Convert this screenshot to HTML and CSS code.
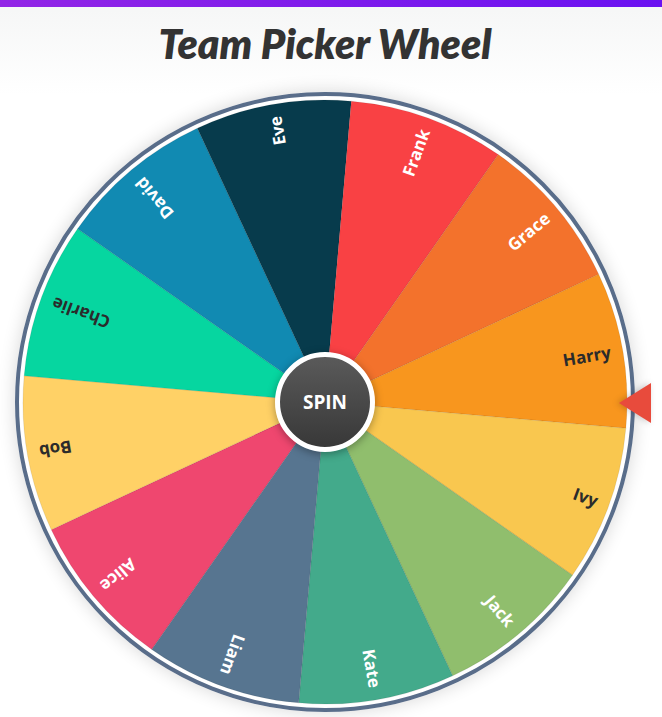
FILE: index.html
```html
<!DOCTYPE html>
<html lang="en">
<head>
<meta charset="utf-8">
<title>Team Picker Wheel</title>
<link rel="stylesheet" href="styles.css">
</head>
<body>
<div class="topbar"></div>
<main class="page">
  <h1 class="title">Team Picker Wheel</h1>
  <div class="wheel-wrap">
    <svg class="wheel" viewBox="0 0 620 620" width="620" height="620">
      <circle cx="310" cy="310" r="308" fill="#ffffff" stroke="#596d8a" stroke-width="4"/>
      <g transform="translate(310 310)" class="slices">
        <path transform="rotate(140)" fill="#ef476f" d="M0 0 L291.71 -78.16 A302 302 0 0 1 291.71 78.16 Z"/>
        <path transform="rotate(170)" fill="#ffd166" d="M0 0 L291.71 -78.16 A302 302 0 0 1 291.71 78.16 Z"/>
        <path transform="rotate(200)" fill="#06d6a0" d="M0 0 L291.71 -78.16 A302 302 0 0 1 291.71 78.16 Z"/>
        <path transform="rotate(230)" fill="#118ab2" d="M0 0 L291.71 -78.16 A302 302 0 0 1 291.71 78.16 Z"/>
        <path transform="rotate(260)" fill="#073b4c" d="M0 0 L291.71 -78.16 A302 302 0 0 1 291.71 78.16 Z"/>
        <path transform="rotate(290)" fill="#f94144" d="M0 0 L291.71 -78.16 A302 302 0 0 1 291.71 78.16 Z"/>
        <path transform="rotate(320)" fill="#f3722c" d="M0 0 L291.71 -78.16 A302 302 0 0 1 291.71 78.16 Z"/>
        <path transform="rotate(-10)" fill="#f8961e" d="M0 0 L291.71 -78.16 A302 302 0 0 1 291.71 78.16 Z"/>
        <path transform="rotate(20)" fill="#f9c74f" d="M0 0 L291.71 -78.16 A302 302 0 0 1 291.71 78.16 Z"/>
        <path transform="rotate(50)" fill="#90be6d" d="M0 0 L291.71 -78.16 A302 302 0 0 1 291.71 78.16 Z"/>
        <path transform="rotate(80)" fill="#43aa8b" d="M0 0 L291.71 -78.16 A302 302 0 0 1 291.71 78.16 Z"/>
        <path transform="rotate(110)" fill="#577590" d="M0 0 L291.71 -78.16 A302 302 0 0 1 291.71 78.16 Z"/>
      </g>
      <g transform="translate(310 310)" class="labels">
        <text transform="rotate(140)" x="290" y="0" class="light">Alice</text>
        <text transform="rotate(170)" x="290" y="0" class="dark">Bob</text>
        <text transform="rotate(200)" x="290" y="0" class="dark">Charlie</text>
        <text transform="rotate(230)" x="290" y="0" class="light">David</text>
        <text transform="rotate(260)" x="290" y="0" class="light">Eve</text>
        <text transform="rotate(290)" x="290" y="0" class="light">Frank</text>
        <text transform="rotate(320)" x="290" y="0" class="light">Grace</text>
        <text transform="rotate(-10)" x="290" y="0" class="dark">Harry</text>
        <text transform="rotate(20)" x="290" y="0" class="dark">Ivy</text>
        <text transform="rotate(50)" x="290" y="0" class="light">Jack</text>
        <text transform="rotate(80)" x="290" y="0" class="light">Kate</text>
        <text transform="rotate(110)" x="290" y="0" class="light">Liam</text>
      </g>
    </svg>
    <button class="spin" type="button">SPIN</button>
    <div class="pointer"></div>
  </div>
</main>
</body>
</html>
```
FILE: styles.css
```css
html, body {
  margin: 0;
  padding: 0;
}
body {
  height: 717px;
  overflow: hidden;
  background: linear-gradient(#f5f6f6 0, #ffffff 95px);
  font-family: "Open Sans", "Liberation Sans", sans-serif;
}
.topbar {
  height: 7px;
  background: linear-gradient(90deg, #9225e6, #6a11f1);
}
.page {
  width: 650px;
  display: flex;
  flex-direction: column;
  align-items: center;
  padding-top: 14px;
}
.title {
  margin: 0;
  font-family: Lato, "Open Sans", sans-serif;
  font-style: italic;
  font-weight: 800;
  font-size: 41px;
  line-height: 46px;
  color: #333333;
}
.wheel-wrap {
  position: relative;
  width: 620px;
  height: 620px;
  margin-top: 25px;
  border-radius: 50%;
  box-shadow: 0 0 18px rgba(0, 0, 0, 0.16);
}
.wheel {
  display: block;
}
.slices path {
  stroke: rgba(0, 0, 0, 0.08);
  stroke-width: 1;
}
.labels text {
  font-family: "Open Sans", sans-serif;
  font-weight: 700;
  font-size: 17px;
  text-anchor: end;
  dominant-baseline: central;
}
.labels .light { fill: #ffffff; }
.labels .dark { fill: #2b2b2b; }
.spin {
  position: absolute;
  left: 50%;
  top: 50%;
  width: 100px;
  height: 100px;
  margin: -50px 0 0 -50px;
  padding: 0;
  border: 5px solid #ffffff;
  border-radius: 50%;
  background: linear-gradient(#5a5a5a, #383838);
  box-shadow: 0 2px 8px rgba(0, 0, 0, 0.35);
  color: #ffffff;
  font-family: "Open Sans", sans-serif;
  font-weight: 700;
  font-size: 19px;
  cursor: pointer;
}
.pointer {
  position: absolute;
  left: 604px;
  top: 291px;
  width: 0;
  height: 0;
  border-top: 20px solid transparent;
  border-bottom: 20px solid transparent;
  border-right: 32px solid #e84b3c;
  filter: drop-shadow(-2px 0 3px rgba(0, 0, 0, 0.2));
}
```
